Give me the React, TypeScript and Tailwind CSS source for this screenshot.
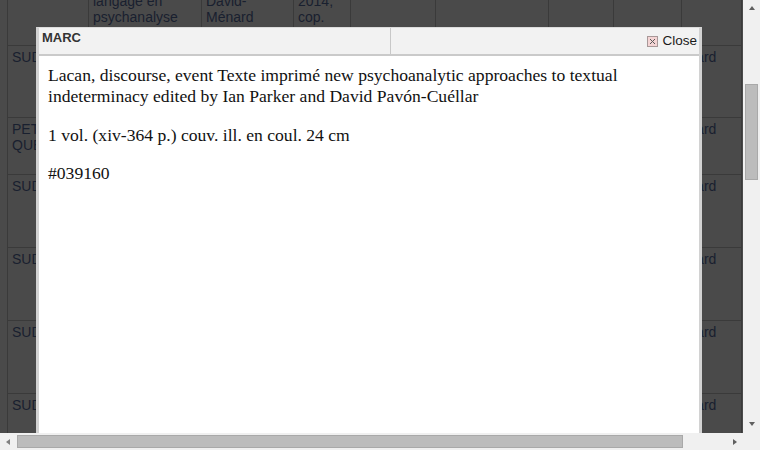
import React from 'react';

type Row = {
  height: string;
  cells: (string[] | null)[];
};

const columnWidths = [
  'w-[81px]',
  'w-[113px]',
  'w-[92px]',
  'w-[57px]',
  'w-[85px]',
  'w-[113px]',
  'w-[65px]',
  'w-[68px]',
  'w-[60px]',
];

const rows: Row[] = [
  {
    height: 'h-[72px]',
    cells: [null, ['Le', 'langage en', 'psychanalyse'], ['Monique', 'David-', 'Ménard'], ['Paris', '2014,', 'cop.'], null, null, null, null, null],
  },
  { height: 'h-[72px]', cells: [['SUDOC'], null, null, null, null, null, null, null, ['Hard']] },
  { height: 'h-[57px]', cells: [['PETIT', 'QUE'], null, null, null, null, null, null, null, ['Hard']] },
  { height: 'h-[73px]', cells: [['SUDOC'], null, null, null, null, null, null, null, ['Hard']] },
  { height: 'h-[73px]', cells: [['SUDOC'], null, null, null, null, null, null, null, ['Hard']] },
  { height: 'h-[73px]', cells: [['SUDOC'], null, null, null, null, null, null, null, ['Hard']] },
  { height: 'h-[73px]', cells: [['SUDOC'], null, null, null, null, null, null, null, ['Hard']] },
];

// dimmed results table that sits behind the dialog
function ResultsTable() {
  return (
    <div className="-mt-[27px] ml-[7px] w-[735px] border-r border-[#3a3a3a] font-['Liberation_Sans',Arial,sans-serif] text-[14px] leading-4 text-[#19202f]">
      {rows.map((row, r) => (
        <div key={r} className={`flex ${row.height}`}>
          {row.cells.map((lines, c) => (
            <div key={c} className={`${columnWidths[c]} shrink-0 overflow-hidden border-l border-t border-[#3a3a3a] pl-[4px] pt-[3px]`}>
              {lines?.map((line, i) => (
                <div key={i} className="whitespace-nowrap">
                  {line}
                </div>
              ))}
            </div>
          ))}
        </div>
      ))}
    </div>
  );
}

function CloseIcon() {
  return (
    <svg width="11" height="11" viewBox="0 0 11 11" className="block shrink-0">
      <rect x="0.5" y="0.5" width="10" height="10" fill="#f4d4d4" stroke="#a89898" />
      <path d="M3 3 L8 8 M8 3 L3 8" stroke="#5a5a5a" strokeWidth="1" />
    </svg>
  );
}

function MarcDialog() {
  return (
    <div className="absolute left-[36px] top-[27px] w-[666px] h-[440px] flex flex-col border-x-[3px] border-t border-x-[#d2d2d2] border-t-[#dcdcdc] bg-white">
      {/* title bar */}
      <div className="flex h-[28px] shrink-0 bg-[#f2f2f2] border-b-2 border-[#cacaca] font-['Liberation_Sans',Arial,sans-serif] text-[13px] leading-[15px]">
        <div className="w-[352px] shrink-0 border-r border-[#c8c8c8] pl-[3px] pt-[2px] font-bold text-[#333333]">
          MARC
        </div>
        <div className="flex flex-1 items-start justify-end gap-[4px] pr-[2px] pt-[5px] text-[13.5px] text-[#1a1a1a]">
          <span className="mt-[3px]">
            <CloseIcon />
          </span>
          <span>Close</span>
        </div>
      </div>

      {/* record */}
      <div className="px-[9px] pt-[9px] font-['Liberation_Serif','Times_New_Roman',serif] text-[17.6px] leading-[21px] text-[#111111]">
        <p className="mb-[17.6px]">
          Lacan, discourse, event Texte imprimé new psychoanalytic approaches to textual
          <br />
          indeterminacy edited by Ian Parker and David Pavón-Cuéllar
        </p>
        <p className="mb-[17.6px]">1 vol. (xiv-364 p.) couv. ill. en coul. 24 cm</p>
        <p>#039160</p>
      </div>
    </div>
  );
}

function VerticalScrollbar() {
  return (
    <div className="w-[17px] shrink-0 flex flex-col items-center bg-[#f0f0f0]">
      <div className="mt-[6px] h-0 w-0 border-x-[3.5px] border-b-[4px] border-x-transparent border-b-[#606060]" />
      <div className="mt-[74px] h-[96px] w-[13px] bg-[#bcbcbc] border border-[#a9a9a9]" />
      <div className="flex-1" />
      <div className="mb-[7px] h-0 w-0 border-x-[3.5px] border-t-[4px] border-x-transparent border-t-[#606060]" />
    </div>
  );
}

function HorizontalScrollbar() {
  return (
    <div className="h-[17px] shrink-0 flex items-center bg-[#f0f0f0]">
      <div className="ml-[6px] h-0 w-0 border-y-[3.5px] border-r-[4px] border-y-transparent border-r-[#808080]" />
      <div className="ml-[7px] h-[13px] w-[666px] bg-[#bcbcbc] border border-[#a9a9a9]" />
      <div className="flex-1" />
      <div className="mr-[23px] h-0 w-0 border-y-[3.5px] border-l-[4px] border-y-transparent border-l-[#606060]" />
    </div>
  );
}

export default function App() {
  return (
    <div className="w-[760px] h-[450px] flex flex-col overflow-hidden bg-[#f0f0f0]">
      <div className="flex flex-1 min-h-0">
        <div className="relative flex-1 overflow-hidden bg-[#4a4a4a]">
          <ResultsTable />
          <MarcDialog />
        </div>
        <VerticalScrollbar />
      </div>
      <HorizontalScrollbar />
    </div>
  );
}
